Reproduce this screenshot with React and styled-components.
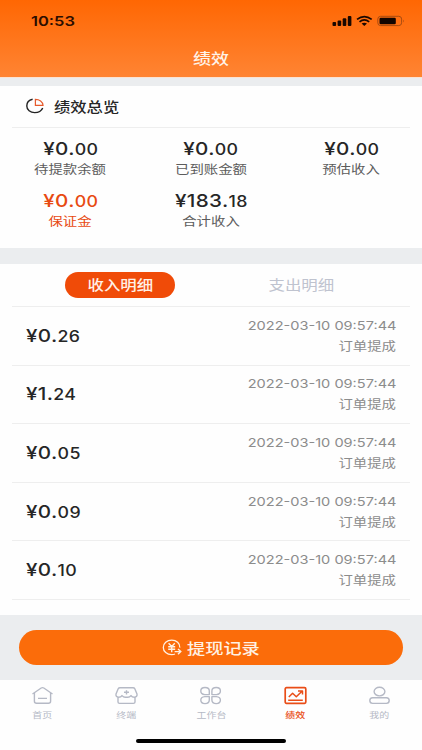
import * as React from 'react';
import styled, { createGlobalStyle } from 'styled-components';

const GlobalStyle = createGlobalStyle`
    * {
        box-sizing: border-box;
    }
    body {
        margin: 0;
        background: #ebedef;
        font-family: Inter, "Noto Sans CJK SC", sans-serif;
        color: #262626;
    }
    button {
        border: 0;
        padding: 0;
        background: none;
        font-family: inherit;
        color: inherit;
    }
`;

const Page = styled.div`
    display: flex;
    flex-direction: column;
    width: 422px;
    height: 750px;
    overflow: hidden;
`;

// wide letterforms used all over the app
const Wide = styled.span`
    display: inline-block;
    white-space: nowrap;
    transform: scaleX(${props => props.$scale || 1.2});
    transform-origin: ${props => props.$from || 'center'} center;
`;

const Header = styled.header`
    height: 78px;
    background: linear-gradient(#ff6703, #ff8433);
    border-bottom: 1px solid #fbe3d3;
`;

const StatusBar = styled.div`
    display: flex;
    justify-content: space-between;
    height: 42px;
    padding: 0 17px 0 31px;
    line-height: 42px;
    font-size: 13.2px;
    font-weight: 600;
    color: #2b0d00;
    svg {
        margin-top: 14px;
    }
`;

const Title = styled.h1`
    margin: 0;
    line-height: 34px;
    text-align: center;
    font-size: 15px;
    font-weight: 500;
    color: #fff3e8;
`;

const Overview = styled.section`
    height: 162px;
    margin-top: 8px;
    padding: 0 12px;
    background: #fefefe;
`;

const OverviewHead = styled.div`
    display: flex;
    align-items: center;
    gap: 10px;
    height: 42px;
    padding: 0 0 2px 14px;
    border-bottom: 1px solid #eeeeee;
    font-size: 13.6px;
    font-weight: 500;
`;

const Stats = styled.div`
    display: grid;
    grid-template-columns: 117px 164px 117px;
    grid-auto-rows: 51.5px;
    padding-top: 10.4px;
`;

const Stat = styled.div`
    text-align: center;
    color: ${props => (props.$accent ? '#e84a12' : 'inherit')};
`;

const Amount = styled.div`
    height: 22px;
    line-height: 22px;
    font-size: 17.8px;
    font-weight: 500;
    letter-spacing: 0.3px;
    small {
        font-size: 15.3px;
    }
`;

const Label = styled.div`
    height: 19px;
    line-height: 19px;
    font-size: 12px;
    color: ${props => (props.$accent ? '#e84a12' : '#5c5c5c')};
`;

const Details = styled.section`
    height: 351px;
    margin-top: 16px;
    padding: 0 12px;
    background: #fefefe;
`;

const Tabs = styled.div`
    display: grid;
    grid-template-columns: 216px 146px;
    align-items: center;
    height: 43px;
    border-bottom: 1px solid #eeeeee;
`;

const Tab = styled.button`
    justify-self: center;
    width: 110px;
    height: 26px;
    border-radius: 13px;
    font-size: 13.7px;
    line-height: 25px;
    font-weight: ${props => (props.$active ? 500 : 400)};
    background: ${props => (props.$active ? '#f04b08' : 'transparent')};
    color: ${props => (props.$active ? '#fff0e6' : '#bfc3cf')};
`;

const Row = styled.div`
    display: flex;
    justify-content: space-between;
    align-items: center;
    height: 58.6px;
    padding: 0 14px;
    border-bottom: 1px solid #eeeeee;
`;

const Meta = styled.div`
    text-align: right;
    font-size: 12px;
    line-height: 21px;
    color: #8c8c8c;
`;

const Footer = styled.div`
    height: 65px;
    padding: 15px 19px 0;
`;

const Withdraw = styled.button`
    display: flex;
    align-items: center;
    justify-content: center;
    gap: 11px;
    width: 100%;
    height: 35px;
    padding: 0 7px 1px 0;
    border-radius: 17.5px;
    background: #fb6c0a;
    color: #fff1e3;
    font-size: 15.2px;
    font-weight: 500;
`;

const NavBar = styled.nav`
    flex: 1;
    background: #fefefe;
`;

const NavItems = styled.div`
    display: grid;
    grid-template-columns: repeat(5, 1fr);
    height: 58px;
`;

const NavItem = styled.div`
    display: flex;
    flex-direction: column;
    align-items: center;
    padding-top: 6px;
    font-size: 8.3px;
    line-height: 12px;
    font-weight: ${props => (props.$active ? 500 : 400)};
    color: ${props => (props.$active ? '#e94d17' : '#b5b9c5')};
    svg {
        margin-bottom: 4px;
    }
`;

const HomeIndicator = styled.div`
    width: 150px;
    height: 4px;
    margin: 1px auto 0;
    border-radius: 2px;
    background: #000;
`;

const StatusIcons = () => (
    <svg width="74" height="14" viewBox="0 0 74 14" fill="none">
        <g fill="#1a0800">
            <rect x="1.5" y="8" width="3.6" height="4" rx="1" />
            <rect x="6.6" y="6.5" width="3.6" height="5.5" rx="1" />
            <rect x="11.7" y="4.2" width="3.6" height="7.8" rx="1" />
            <rect x="16.8" y="2" width="3.6" height="10" rx="1" />
            <path d="M33.3 12 L30.6 9.6 Q33.3 7.8 36 9.6 Z" />
        </g>
        <g stroke="#1a0800" strokeWidth="1.7">
            <path d="M26 5.4 Q33.3 -0.2 40.7 5.4" />
            <path d="M28.5 7.9 Q33.3 4 38.2 7.9" />
        </g>
        <rect x="46.8" y="2.3" width="23.8" height="9.3" rx="2.8" stroke="#a84a10" strokeWidth="1" />
        <rect x="48.5" y="3.8" width="16.3" height="6.4" rx="1.2" fill="#120500" />
        <path d="M72 5.5 Q73.6 7 72 8.5 Z" fill="#a84a10" />
    </svg>
);

const PieIcon = () => (
    <svg width="18" height="16" viewBox="0 0 18 16" fill="none">
        <path d="M6.6 1.3 C3.4 2 0.8 4.6 0.8 7.9 C0.8 11.8 4.3 14.6 8.7 14.6 C12.5 14.6 15.6 12.6 16.7 9.9" stroke="#222" strokeWidth="1.4" />
        <path d="M9.4 1.3 C13.4 1.3 16.8 3.6 17 7.3 H9.4 Z" stroke="#e65a2c" strokeWidth="1.2" />
    </svg>
);

const YenIcon = () => (
    <svg width="20" height="17" viewBox="0 0 20 17" fill="none" stroke="currentColor" strokeWidth="1.3">
        <path d="M17.8 8.6 C18.1 4.4 14.5 1.2 9.7 1.2 C4.9 1.2 1.3 4.4 1.3 8.4 C1.3 12.5 4.9 15.6 9.7 15.6 C11 15.6 12.1 15.4 13 15" />
        <path d="M6.6 4.3 L9.7 7.6 L12.8 4.3 M6.2 7.7 H13.2 M6.2 10.3 H13.2 M9.7 7.6 V13.3" strokeWidth="1.4" />
        <path d="M12.6 12.6 H18.6 M16 10 L18.8 12.6 L16 15.2" strokeWidth="1.4" />
    </svg>
);

const navIcons = {
    home: (
        <>
            <path d="M1.5 8 L10.2 2 Q11.5 1.2 12.8 2 L21.5 8" />
            <path d="M3.4 7 V15.3 Q3.4 17.3 5.6 17.3 H17.4 Q19.6 17.3 19.6 15.3 V7 M7 12.4 H16" />
        </>
    ),
    shop: (
        <>
            <path d="M5 1.8 H18 Q19.3 1.8 19.8 2.8 L22 8 Q22.5 11 19.4 11.2 Q17 11.2 16 9.6 Q14.2 11.9 11.5 11.1 Q9 11.9 7 9.6 Q6 11.2 3.6 11.2 Q0.5 11 1 8 L3.2 2.8 Q3.7 1.8 5 1.8 Z" />
            <path d="M3 11.2 V16 Q3 17.4 4.6 17.4 H18.4 Q20 17.4 20 16 V11.2 M11.5 4.2 V8.4 M9 6.3 H14" />
        </>
    ),
    grid: (
        <>
            <path d="M10.3 8.6 H5.8 Q1.8 8.3 1.8 5 Q1.8 1.5 6 1.5 Q10.3 1.5 10.3 5 Z" />
            <path d="M12.9 8.6 H17.4 Q21.4 8.3 21.4 5 Q21.4 1.5 17.2 1.5 Q12.9 1.5 12.9 5 Z" />
            <path d="M10.3 10.6 H5.8 Q1.8 10.9 1.8 14.1 Q1.8 17.6 6 17.6 Q10.3 17.6 10.3 14.1 Z" />
            <path d="M12.9 10.6 H17.4 Q21.4 10.9 21.4 14.1 Q21.4 17.6 17.2 17.6 Q12.9 17.6 12.9 14.1 Z" />
        </>
    ),
    chart: (
        <>
            <rect x="1.2" y="1.7" width="20.6" height="15.6" rx="1.2" strokeWidth="1.7" />
            <path d="M4.8 11 L8.6 7.3 L12.3 10.8 L18 5.3 M14 4.9 H18.5 V8.6 M4.2 14.2 H18.8" strokeWidth="1.5" />
        </>
    ),
    user: (
        <>
            <ellipse cx="11.5" cy="5.6" rx="5.4" ry="4.3" />
            <rect x="1.8" y="11.8" width="19.4" height="5.6" rx="2.8" />
        </>
    ),
};

const NavIcon = ({ name }) => (
    <svg width="23" height="19" viewBox="0 0 23 19" fill="none" stroke="currentColor" strokeWidth="1.4" strokeLinejoin="round">
        {navIcons[name]}
    </svg>
);

const Money = ({ value, from }) => {
    const [yuan, cents] = value.split('.');
    return (
        <Amount>
            <Wide $from={from} $scale={1.16}>¥{yuan}.<small>{cents}</small></Wide>
        </Amount>
    );
};

const stats = [
    { value: '0.00', label: '待提款余额' },
    { value: '0.00', label: '已到账金额' },
    { value: '0.00', label: '预估收入' },
    { value: '0.00', label: '保证金', accent: true },
    { value: '183.18', label: '合计收入' },
];

const records = ['0.26', '1.24', '0.05', '0.09', '0.10'];

const navItems = [
    { icon: 'home', label: '首页' },
    { icon: 'shop', label: '终端' },
    { icon: 'grid', label: '工作台' },
    { icon: 'chart', label: '绩效', active: true },
    { icon: 'user', label: '我的' },
];

export default class App extends React.Component {
    render() {
        return (
            <Page>
                <GlobalStyle />
                <Header>
                    <StatusBar>
                        <Wide $from="left" $scale={1.25}>10:53</Wide>
                        <StatusIcons />
                    </StatusBar>
                    <Title><Wide>绩效</Wide></Title>
                </Header>
                <Overview>
                    <OverviewHead>
                        <PieIcon />
                        <Wide $from="left">绩效总览</Wide>
                    </OverviewHead>
                    <Stats>
                        {stats.map(stat => (
                            <Stat key={stat.label} $accent={stat.accent}>
                                <Money value={stat.value} />
                                <Label $accent={stat.accent}><Wide>{stat.label}</Wide></Label>
                            </Stat>
                        ))}
                    </Stats>
                </Overview>
                <Details>
                    <Tabs>
                        <Tab $active><Wide>收入明细</Wide></Tab>
                        <Tab><Wide>支出明细</Wide></Tab>
                    </Tabs>
                    {records.map(value => (
                        <Row key={value}>
                            <Money value={value} from="left" />
                            <Meta>
                                <div><Wide $from="right" $scale={1.215}>2022-03-10 09:57:44</Wide></div>
                                <div><Wide $from="right">订单提成</Wide></div>
                            </Meta>
                        </Row>
                    ))}
                </Details>
                <Footer>
                    <Withdraw>
                        <YenIcon />
                        <Wide>提现记录</Wide>
                    </Withdraw>
                </Footer>
                <NavBar>
                    <NavItems>
                        {navItems.map(item => (
                            <NavItem key={item.icon} $active={item.active}>
                                <NavIcon name={item.icon} />
                                <Wide>{item.label}</Wide>
                            </NavItem>
                        ))}
                    </NavItems>
                    <HomeIndicator />
                </NavBar>
            </Page>
        );
    }
}
